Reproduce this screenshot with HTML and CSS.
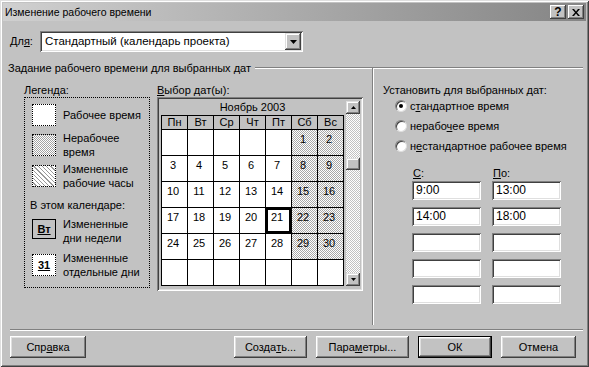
FILE: index.html
```html
<!DOCTYPE html>
<html lang="ru">
<head>
<meta charset="utf-8">
<title>Изменение рабочего времени</title>
<link rel="stylesheet" href="styles.css">
</head>
<body>
<div class="win">
  <div class="title">
    <span class="title-text">Изменение рабочего времени</span>
    <span class="capbtn q">?</span>
    <span class="capbtn"><svg width="8" height="7" viewBox="0 0 8 7"><path d="M0 0h2l2 2.5 2-2.5h2l-3 3.5 3 3.5h-2l-2-2.5-2 2.5h-2l3-3.5z" fill="#000"/></svg></span>
  </div>

  <div class="forrow">
    <span class="forlabel">Дл<u>я</u>:</span>
    <div class="combo">
      <span class="combo-text">Стандартный (календарь проекта)</span>
      <span class="ddbtn"><svg width="7" height="4" viewBox="0 0 7 4"><path d="M0 0h7l-3.5 4z" fill="#000"/></svg></span>
    </div>
  </div>

  <div class="gtitle">
    <span>Задание рабочего времени для выбранных дат</span>
    <span class="gline"></span>
  </div>

  <div class="cols">
    <div class="legend-col">
      <div class="clabel">Легенда:</div>
      <div class="legend-box">
        <div class="litem l1"><span class="sw sw-white"></span><span class="ltext">Рабочее время</span></div>
        <div class="litem l2"><span class="sw sw-gray"></span><span class="ltext">Нерабочее<br>время</span></div>
        <div class="litem l3"><span class="sw sw-lines"></span><span class="ltext">Измененные<br>рабочие часы</span></div>
        <div class="lsub">В этом календаре:</div>
        <div class="litem l4"><span class="sw sw-day">Вт</span><span class="ltext">Измененные<br>дни недели</span></div>
        <div class="litem l5"><span class="sw sw-date">31</span><span class="ltext">Измененные<br>отдельные дни</span></div>
      </div>
    </div>

    <div class="cal-col">
      <div class="clabel"><u>В</u>ыбор дат(ы):</div>
      <div class="calframe">
        <div class="calmain">
          <div class="month">Ноябрь 2003</div>
          <div class="grid">
            <div class="hd">Пн</div><div class="hd">Вт</div><div class="hd">Ср</div><div class="hd">Чт</div><div class="hd">Пт</div><div class="hd">Сб</div><div class="hd">Вс</div>
            <div class="d"></div><div class="d"></div><div class="d"></div><div class="d"></div><div class="d"></div><div class="d we">1</div><div class="d we">2</div>
            <div class="d">3</div><div class="d">4</div><div class="d">5</div><div class="d">6</div><div class="d">7</div><div class="d we">8</div><div class="d we">9</div>
            <div class="d">10</div><div class="d">11</div><div class="d">12</div><div class="d">13</div><div class="d">14</div><div class="d we">15</div><div class="d we">16</div>
            <div class="d">17</div><div class="d">18</div><div class="d">19</div><div class="d">20</div><div class="d sel">21</div><div class="d we">22</div><div class="d we">23</div>
            <div class="d">24</div><div class="d">25</div><div class="d">26</div><div class="d">27</div><div class="d">28</div><div class="d we">29</div><div class="d we">30</div>
            <div class="d"></div><div class="d"></div><div class="d"></div><div class="d"></div><div class="d"></div><div class="d"></div><div class="d"></div>
          </div>
        </div>
        <div class="scroll">
          <span class="sbtn"><svg width="5" height="3" viewBox="0 0 5 3"><path d="M2.5 0L5 3H0z" fill="#000"/></svg></span>
          <span class="strack"><span class="thumb"></span></span>
          <span class="sbtn"><svg width="5" height="3" viewBox="0 0 5 3"><path d="M0 0h5L2.5 3z" fill="#000"/></svg></span>
        </div>
      </div>
    </div>

    <div class="vdiv"></div>

    <div class="set-col">
      <div class="set-label">Установить для выбранных дат:</div>
      <div class="radio-row"><span class="radio on"></span><span>с<u>т</u>андартное время</span></div>
      <div class="radio-row"><span class="radio"></span><span>нерабо<u>ч</u>ее время</span></div>
      <div class="radio-row"><span class="radio"></span><span>н<u>е</u>стандартное рабочее время</span></div>
      <div class="thdr"><span><u>С</u>:</span><span><u>П</u>о:</span></div>
      <div class="tgrid">
        <div class="tin">9:00</div><div class="tin">13:00</div>
        <div class="tin">14:00</div><div class="tin">18:00</div>
        <div class="tin"></div><div class="tin"></div>
        <div class="tin"></div><div class="tin"></div>
        <div class="tin"></div><div class="tin"></div>
      </div>
    </div>
  </div>

  <div class="hsep"></div>

  <div class="btns">
    <span class="btn w76">Спр<u>а</u>вка</span>
    <span class="spacer"></span>
    <div class="btngroup">
      <span class="btn w73">Созда<u>т</u>ь...</span>
      <span class="btn w93">Пара<u>м</u>етры...</span>
      <span class="btn w74 default">ОК</span>
      <span class="btn w75">Отмена</span>
    </div>
  </div>
</div>
</body>
</html>
```

FILE: styles.css
```css
* { box-sizing: border-box; margin: 0; padding: 0; }
body {
  margin: 0;
  font: 11px/13px "Liberation Sans", Arial, sans-serif;
  color: #000;
  background: #c2c2c2;
}
u { text-decoration: underline; text-underline-offset: 1px; }

.win {
  width: 589px;
  height: 367px;
  background: #c2c2c2;
  padding: 3px;
  display: flex;
  flex-direction: column;
  box-shadow: inset 1px 1px #dfdfdf, inset -1px -1px #404040, inset 2px 2px #fff, inset -2px -2px #808080;
}

.title {
  height: 18px;
  background: linear-gradient(to right, #d0d0d0, #858585);
  display: flex;
  align-items: center;
  padding: 0 2px;
}
.title-text { flex: 1; padding-top: 1px; font-size: 10.5px; }
.capbtn {
  width: 16px;
  height: 14px;
  background: #c2c2c2;
  display: flex;
  align-items: center;
  justify-content: center;
  box-shadow: inset -1px -1px #404040, inset 1px 1px #fff, inset -2px -2px #808080;
}
.capbtn + .capbtn { margin-left: 2px; }
.capbtn.q { font-weight: bold; font-size: 12px; }

.forrow {
  display: flex;
  align-items: center;
  height: 21px;
  margin-top: 10px;
  padding-left: 7px;
}
.forlabel { width: 30px; }
.combo {
  width: 263px;
  height: 21px;
  background: #fff;
  display: flex;
  align-items: center;
  padding: 2px;
  box-shadow: inset 1px 1px #808080, inset -1px -1px #fff, inset 2px 2px #404040, inset -2px -2px #dfdfdf;
}
.combo-text { flex: 1; padding-left: 3px; font-size: 11.5px; }
.ddbtn {
  width: 16px;
  height: 17px;
  background: #c2c2c2;
  display: flex;
  align-items: center;
  justify-content: center;
  box-shadow: inset -1px -1px #404040, inset 1px 1px #dfdfdf, inset -2px -2px #808080, inset 2px 2px #fff;
}

.gtitle {
  display: flex;
  align-items: center;
  height: 12px;
  margin-top: 10px;
  padding: 0 3px 0 5px;
}
.gline {
  flex: 1;
  height: 2px;
  margin-left: 4px;
  border-top: 1px solid #808080;
  border-bottom: 1px solid #fff;
}

.cols {
  display: flex;
  height: 255px;
  padding-left: 21px;
}
.clabel { height: 13px; }

.legend-col { width: 126px; padding-top: 10px; }
.legend-box {
  height: 191px;
  border: 1px dotted #000;
  padding-left: 7px;
}
.litem { display: flex; align-items: center; }
.ltext { line-height: 14px; }
.sw {
  width: 24px;
  height: 22px;
  flex: none;
  margin-right: 7px;
  border: 1px dotted #000;
}
.l1 { margin-top: 6px; }
.l2 { margin-top: 5px; }
.l3 { margin-top: 3px; }
.l4 { margin-top: 5px; }
.l5 { margin-top: 6px; }
.lsub { margin-top: 8px; margin-left: -2px; line-height: 14px; }
.sw-white { background: #fff; }
.sw-gray {
  background: repeating-conic-gradient(#fff 0 25%, #a4a4a4 0 50%) 0 0 / 2px 2px;
}
.sw-lines {
  background: repeating-linear-gradient(45deg, #fff 0 2px, #9a9a9a 2px 3px);
}
.sw-day {
  height: 20px;
  align-self: flex-start;
  margin-top: 2px;
  border: 1px solid #000;
  background: #c2c2c2;
  font-weight: bold;
  text-decoration: underline;
  display: flex;
  align-items: center;
  justify-content: center;
}
.sw-date {
  background: #fff;
  font-weight: bold;
  text-decoration: underline;
  display: flex;
  align-items: center;
  justify-content: center;
}

.cal-col { width: 206px; margin-left: 7px; padding-top: 10px; }
.calframe {
  height: 194px;
  padding: 2px;
  display: flex;
  box-shadow: inset 1px 1px #808080, inset -1px -1px #fff, inset 2px 2px #404040, inset -2px -2px #dfdfdf;
}
.calmain { padding-left: 2px; }
.month {
  width: 183px;
  height: 16px;
  line-height: 16px;
  text-align: center;
}
.grid {
  display: grid;
  grid-template-columns: repeat(7, 25px);
  grid-template-rows: 13px repeat(6, 25px);
  gap: 1px;
  width: 183px;
  background: #000;
  border: 1px solid #000;
}
.hd {
  background: #c2c2c2;
  text-align: center;
  line-height: 13px;
}
.d {
  background: #fff;
  text-align: center;
  padding: 3px 3px 0 0;
  line-height: 12px;
}
.d.we {
  background: repeating-conic-gradient(#fff 0 25%, #a8a8a8 0 50%) 0 0 / 2px 2px;
}
.d.sel { box-shadow: inset 0 0 0 2px #000; }

.scroll {
  width: 14px;
  margin: 2px 1px 3px 2px;
  display: flex;
  flex-direction: column;
}
.sbtn {
  height: 13px;
  flex: none;
  background: #c2c2c2;
  display: flex;
  align-items: center;
  justify-content: center;
  box-shadow: inset -1px -1px #404040, inset 1px 1px #dfdfdf, inset -2px -2px #808080, inset 2px 2px #fff;
}
.strack {
  flex: 1;
  background: repeating-conic-gradient(#fff 0 25%, #c2c2c2 0 50%) 0 0 / 2px 2px;
  padding-top: 44px;
}
.thumb {
  display: block;
  height: 12px;
  background: #c2c2c2;
  box-shadow: inset -1px -1px #404040, inset 1px 1px #dfdfdf, inset -2px -2px #808080, inset 2px 2px #fff;
}

.vdiv {
  width: 2px;
  height: 257px;
  margin: -6px 0 0 9px;
  border-left: 1px solid #808080;
  border-right: 1px solid #fff;
}

.set-col { padding: 10px 0 0 9px; }
.set-label { height: 12px; line-height: 12px; }
.radio-row {
  display: flex;
  align-items: center;
  height: 20px;
  padding-left: 12px;
}
.radio {
  width: 12px;
  height: 12px;
  flex: none;
  margin-right: 3px;
  border-radius: 50%;
  background: #fff;
  border: 1px solid;
  border-color: #808080 #dfdfdf #dfdfdf #808080;
  box-shadow: inset 1px 1px #404040;
  display: flex;
  align-items: center;
  justify-content: center;
}
.radio.on::after {
  content: "";
  width: 4px;
  height: 4px;
  border-radius: 50%;
  background: #000;
}
.thdr {
  display: grid;
  grid-template-columns: 69px 69px;
  column-gap: 11px;
  margin-top: 11px;
  padding-left: 30px;
  height: 13px;
  margin-bottom: 1px;
}
.tgrid {
  display: grid;
  grid-template-columns: 69px 69px;
  grid-auto-rows: 19px;
  column-gap: 11px;
  row-gap: 7px;
  padding-left: 29px;
}
.tin {
  background: #fff;
  padding-left: 4px;
  line-height: 19px;
  font-size: 12px;
  box-shadow: inset 1px 1px #808080, inset -1px -1px #fff, inset 2px 2px #404040, inset -2px -2px #dfdfdf;
}

.hsep {
  height: 2px;
  margin: 0 3px 0 7px;
  border-top: 1px solid #808080;
  border-bottom: 1px solid #fff;
}

.btns {
  display: flex;
  margin-top: 5px;
  padding: 0 10px 0 7px;
}
.spacer { flex: 1; }
.btngroup { display: flex; gap: 9px; }
.btn {
  height: 22px;
  background: #c2c2c2;
  display: flex;
  align-items: center;
  justify-content: center;
  box-shadow: inset -1px -1px #404040, inset 1px 1px #fff, inset -2px -2px #808080, inset 2px 2px #dfdfdf;
}
.btn.default {
  box-shadow: inset 0 0 0 1px #000, inset -2px -2px #404040, inset 2px 2px #fff, inset -3px -3px #808080, inset 3px 3px #dfdfdf;
}
.w73 { width: 73px; }
.w74 { width: 74px; }
.w75 { width: 75px; }
.w76 { width: 76px; }
.w93 { width: 93px; }
```
